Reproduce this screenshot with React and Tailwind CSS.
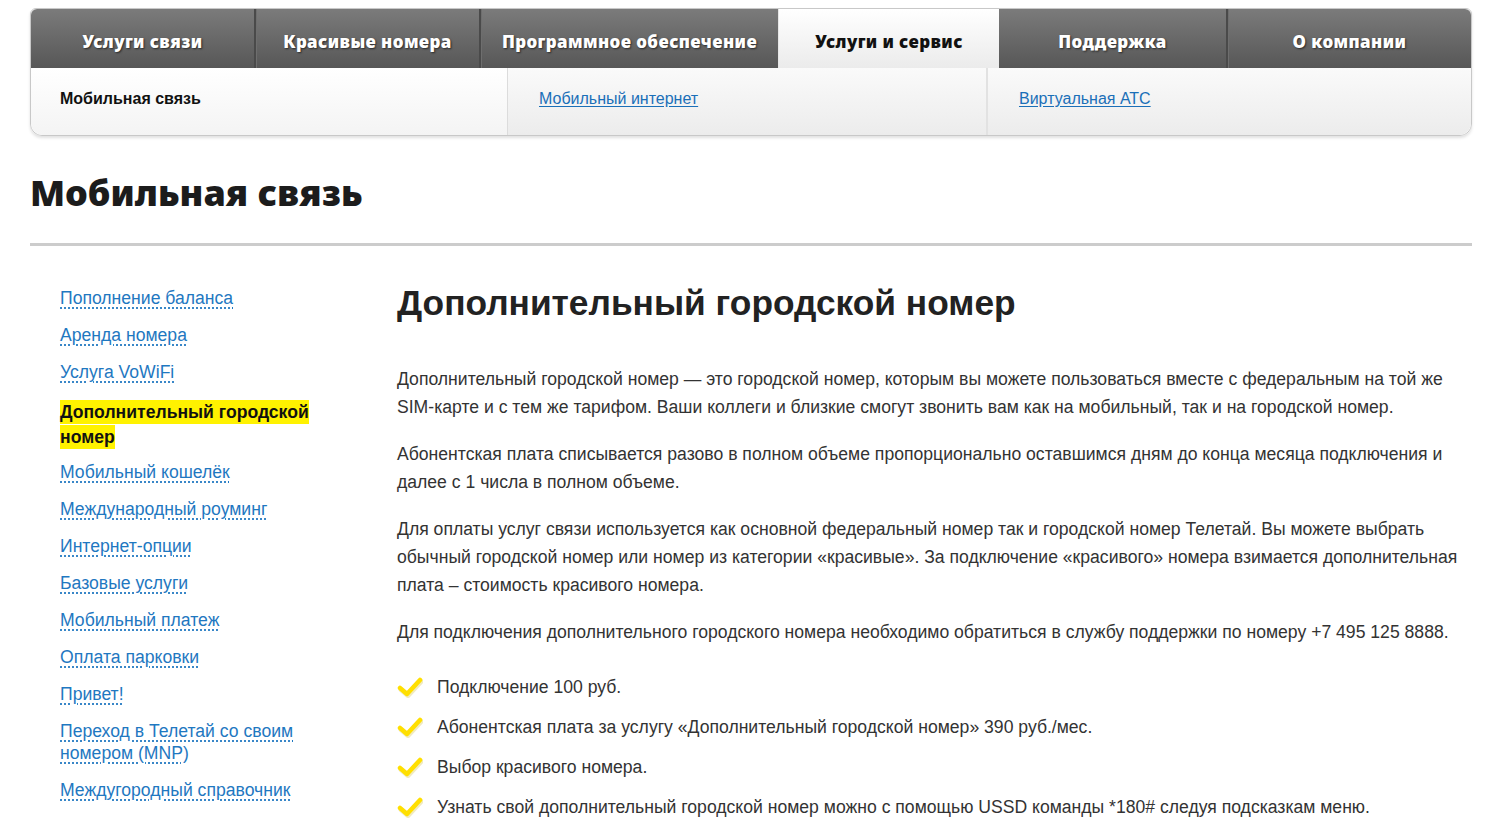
import React from 'react';

const tabs = [
  { label: 'Услуги связи', w: 'w-[223px]' },
  { label: 'Красивые номера', w: 'w-[225px]' },
  { label: 'Программное обеспечение', w: 'w-[299px]' },
  { label: 'Услуги и сервис', w: 'w-[221px]', active: true },
  { label: 'Поддержка', w: 'w-[227px]' },
  { label: 'О компании', w: 'flex-1' },
];

const sideLinks = [
  'Пополнение баланса',
  'Аренда номера',
  'Услуга VoWiFi',
  'Дополнительный городской номер',
  'Мобильный кошелёк',
  'Международный роуминг',
  'Интернет-опции',
  'Базовые услуги',
  'Мобильный платеж',
  'Оплата парковки',
  'Привет!',
  'Переход в Телетай со своим номером (MNP)',
  'Междугородный справочник',
];

const features = [
  'Подключение 100 руб.',
  'Абонентская плата за услугу «Дополнительный городской номер» 390 руб./мес.',
  'Выбор красивого номера.',
  'Узнать свой дополнительный городской номер можно с помощью USSD команды *180# следуя подсказкам меню.',
];

const Check = () => (
  <svg width="26" height="22" viewBox="0 0 26 22" className="shrink-0">
    <path d="M3 12 L10 18 L23 4" stroke="#c9b000" strokeOpacity="0.25" strokeWidth="5" fill="none" strokeLinecap="round" strokeLinejoin="round" transform="translate(1 1.5)" />
    <path d="M3 12 L10 18 L23 4" stroke="#ffdf00" strokeWidth="4.5" fill="none" strokeLinecap="round" strokeLinejoin="round" />
  </svg>
);

export default function App() {
  return (
    <div className="min-h-screen bg-white font-['Liberation_Sans',Arial,sans-serif] text-[#333]">
      <div className="pl-[30px] pr-[28px] pt-[8px]">
        {/* Top nav */}
        <div className="rounded-t-[6px] rounded-b-[12px] border border-[#c8c8c8] shadow-[0_2px_3px_rgba(0,0,0,0.12)]">
          <div className="flex h-[59px] rounded-t-[6px] overflow-hidden bg-gradient-to-b from-[#7b7b7b] to-[#575757]">
            {tabs.map((t, i) => (
              <div
                key={t.label}
                className={`${t.w} flex items-center justify-center pt-[6px] text-[17px] font-black tracking-[0.4px] font-['Noto_Sans',sans-serif] ${
                  t.active
                    ? 'bg-gradient-to-b from-white to-[#ebebeb] text-[#111] border-l border-[#e6e6e6]'
                    : `text-white [text-shadow:1px_1px_2px_rgba(0,0,0,0.6)] ${i > 0 && !tabs[i - 1].active ? 'border-l-2 border-[#4a4a4a] shadow-[inset_1px_0_0_#6e6e6e]' : ''}`
                }`}
              >
                {t.label}
              </div>
            ))}
          </div>
          <div className="flex h-[67px] rounded-b-[12px] overflow-hidden text-[16px]">
            <div className="w-[476px] flex items-center pl-[29px] pb-[6px] bg-gradient-to-b from-white to-[#f4f4f4] text-[#111] font-bold">
              Мобильная связь
            </div>
            <div className="w-[479px] flex items-center pl-[31px] pb-[6px] bg-gradient-to-b from-[#fafafa] to-[#ececec] border-l border-[#dcdcdc]">
              <a href="#" className="text-[#1a6fb8] underline underline-offset-2">Мобильный интернет</a>
            </div>
            <div className="flex-1 flex items-center pl-[31px] pb-[6px] bg-gradient-to-b from-[#fafafa] to-[#ececec] border-l-2 border-[#e2e2e2]">
              <a href="#" className="text-[#1a6fb8] underline underline-offset-2">Виртуальная АТС</a>
            </div>
          </div>
        </div>

        {/* Page title */}
        <h1 className="mt-[35px] text-[36px] leading-[44px] font-black text-[#1c1c1c] font-['Noto_Sans',sans-serif]">
          Мобильная связь
        </h1>
        <div className="mt-[28px] h-[3px] bg-[#cccccc]" />

        <div className="flex mt-[41px]">
          {/* Sidebar */}
          <ul className="w-[367px] shrink-0 pl-[30px] pr-[50px] flex flex-col gap-[15px] text-[17.6px] leading-[22px]">
            {sideLinks.map((l, i) =>
              i === 3 ? (
                <li key={l} className="pt-[2px] -mb-[4px]">
                  <span className="bg-[#fff200] font-bold text-[#111] [box-decoration-break:clone] leading-[25px] py-[2px]">
                    {l}
                  </span>
                </li>
              ) : (
                <li key={l}>
                  <a href="#" className="text-[#1f78c1] underline decoration-dotted decoration-[#1f78c1] underline-offset-[4px]">
                    {l}
                  </a>
                </li>
              )
            )}
          </ul>

          {/* Main */}
          <div className="flex-1">
            <h2 className="text-[35.3px] leading-[40px] font-bold text-[#222] -mt-[4px]">
              Дополнительный городской номер
            </h2>
            <div className="mt-[42px] text-[17.6px] leading-[28px] text-[#333] flex flex-col gap-[19px]">
              <p>
                Дополнительный городской номер — это городской номер, которым вы можете пользоваться вместе с федеральным на той же SIM-карте и с тем же тарифом. Ваши коллеги и близкие смогут звонить вам как на мобильный, так и на городской номер.
              </p>
              <p>
                Абонентская плата списывается разово в полном объеме пропорционально оставшимся дням до конца месяца подключения и далее с 1 числа в полном объеме.
              </p>
              <p>
                Для оплаты услуг связи используется как основной федеральный номер так и городской номер Телетай. Вы можете выбрать обычный городской номер или номер из категории «красивые». За подключение «красивого» номера взимается дополнительная плата – стоимость красивого номера.
              </p>
              <p>
                Для подключения дополнительного городского номера необходимо обратиться в службу поддержки по номеру +7 495 125 8888.
              </p>
            </div>
            <ul className="mt-[27px] flex flex-col gap-[12px] text-[17.6px] leading-[28px]">
              {features.map((f) => (
                <li key={f} className="flex items-center gap-[14px]">
                  <Check />
                  <span>{f}</span>
                </li>
              ))}
            </ul>
          </div>
        </div>
      </div>
    </div>
  );
}
